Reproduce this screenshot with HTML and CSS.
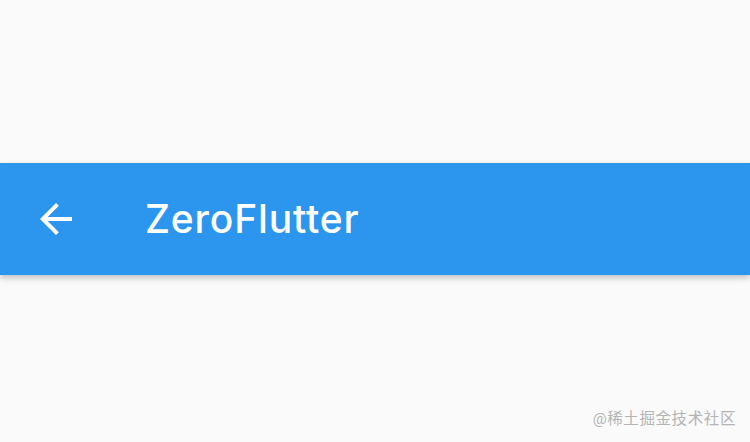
FILE: index.html
```html
<!DOCTYPE html>
<html lang="zh">
<head>
	<meta charset="UTF-8">
	<title>ZeroFlutter</title>
	<link rel="stylesheet" href="styles.css">
</head>
<body>
	<div class="page">
		<header class="app-bar">
			<button class="back" aria-label="back">
				<svg width="48" height="48" viewBox="0 0 24 24">
					<path d="M20 11H7.83l5.59-5.59L12 4l-8 8 8 8 1.41-1.41L7.83 13H20v-2z" fill="#fff"/>
				</svg>
			</button>
			<h1 class="title">ZeroFlutter</h1>
		</header>
		<div class="mark">@稀土掘金技术社区</div>
	</div>
</body>
</html>
```

FILE: styles.css
```css
* {
	margin: 0;
	padding: 0;
}

body {
	background: #fafafa;
	font-family: Roboto, "Noto Sans CJK SC", sans-serif;
	overflow: hidden;
}

.page {
	height: 442px;
	display: flex;
	flex-direction: column;
	padding-top: 163px;
	box-sizing: border-box;
}

.app-bar {
	height: 112px;
	background: #2c96ee;
	display: flex;
	align-items: center;
	box-shadow: 0 3px 6px rgba(0, 0, 0, 0.22);
}

.back {
	border: none;
	background: none;
	width: 48px;
	height: 48px;
	margin-left: 32px;
	display: flex;
}

.title {
	margin-left: 65px;
	color: #fff;
	font-family: Inter, Roboto, sans-serif;
	font-size: 39px;
	font-weight: 500;
	letter-spacing: 0.85px;
	margin-top: -2px;
}

.mark {
	margin-top: auto;
	margin-bottom: 14px;
	align-self: flex-end;
	margin-right: 14px;
	color: #b4b4b4;
	font-size: 15.5px;
	letter-spacing: 0.6px;
}
```
